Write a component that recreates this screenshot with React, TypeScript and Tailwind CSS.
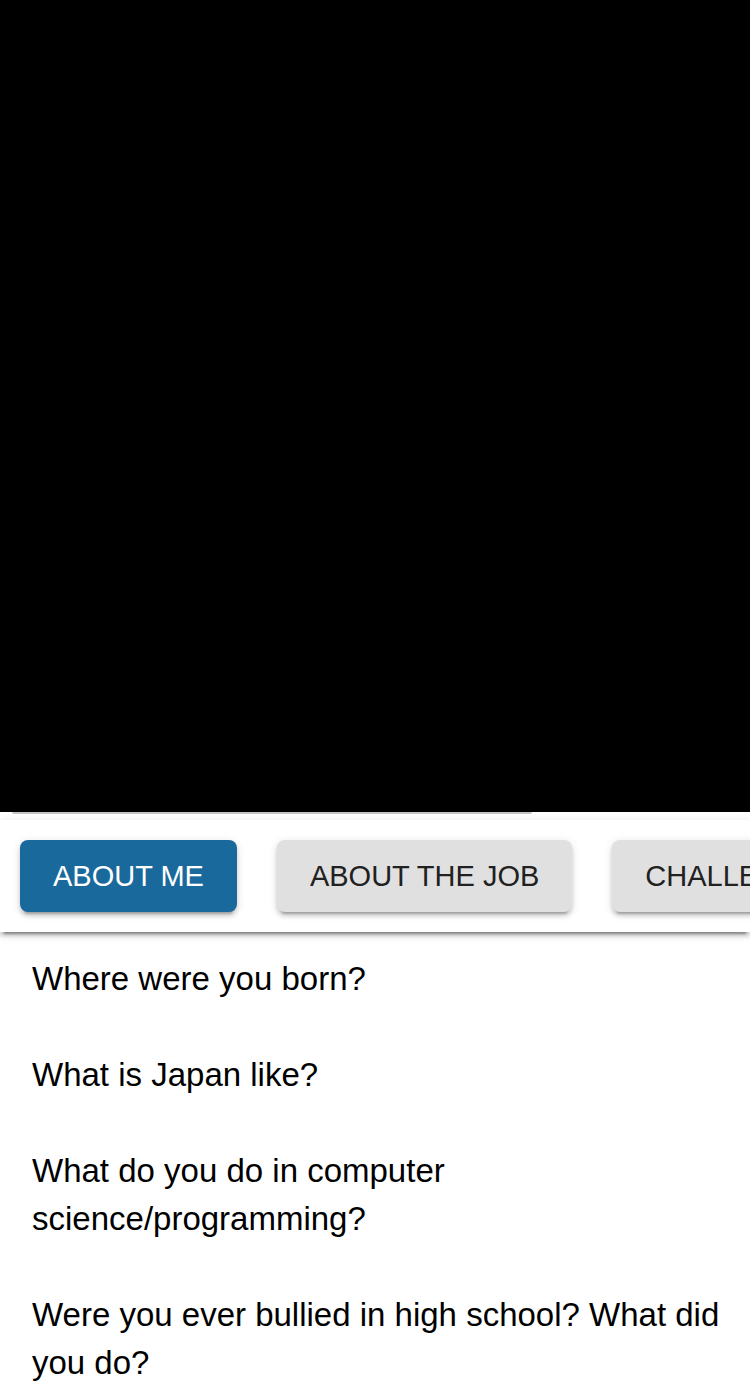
const categories = ["About Me", "About the Job", "Challenges"];

const questions = [
  "Where were you born?",
  "What is Japan like?",
  "What do you do in computer science/programming?",
  "Were you ever bullied in high school? What did you do?",
];

export default function App() {
  return (
    <main className="flex min-h-screen flex-col overflow-hidden bg-white font-['Liberation_Sans',Arial,sans-serif] text-black">
      <section aria-label="Video" className="h-[812px] w-full shrink-0 bg-black" />
      <div className="h-2 px-3">
        <div className="h-[2px] w-[520px] rounded-b bg-[#c4c4c4]" />
      </div>
      <nav className="flex gap-10 overflow-hidden p-5 shadow-[0_6px_2px_-4px_rgba(0,0,0,0.3),0_4px_4px_0_rgba(0,0,0,0.18),0_2px_10px_0_rgba(0,0,0,0.12)]">
        {categories.map((category, index) => (
          <button
            key={category}
            type="button"
            className={`shrink-0 rounded-lg px-[33px] py-3 text-[29px] leading-[48px] uppercase shadow-[0_6px_2px_-4px_rgba(0,0,0,0.2),0_4px_4px_0_rgba(0,0,0,0.14),0_2px_10px_0_rgba(0,0,0,0.12)] ${
              index === 0 ? "bg-[#1a699c] text-white" : "bg-[#e0e0e0] text-[#212121]"
            }`}
          >
            {category}
          </button>
        ))}
      </nav>
      <ul className="flex flex-col gap-12 py-[23px] pr-6 pl-8 text-[33px] leading-[48px]">
        {questions.map((question) => (
          <li key={question}>{question}</li>
        ))}
      </ul>
    </main>
  );
}
